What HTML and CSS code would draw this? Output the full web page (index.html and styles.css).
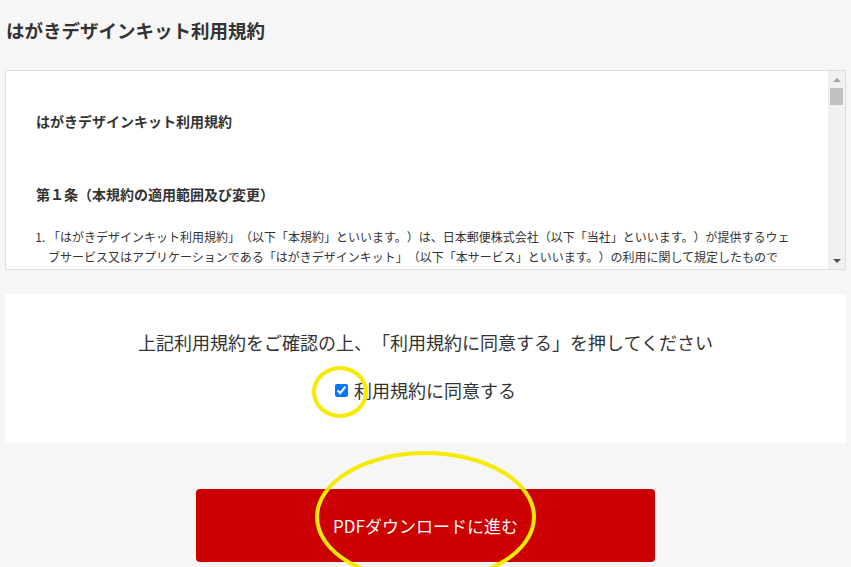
FILE: index.html
```html
<!DOCTYPE html>
<html lang="ja">
<head>
    <meta charset="UTF-8">
    <meta name="viewport" content="width=device-width, initial-scale=1.0">
    <title>はがきデザインキット利用規約</title>
    <link rel="stylesheet" href="styles.css">
</head>
<body>
    <div class="page">
        <h1 class="page-title">はがきデザインキット利用規約</h1>

        <div class="terms">
            <div class="terms-body">
                <h2 class="terms-title">はがきデザインキット利用規約</h2>

                <h3 class="article-title">第１条（本規約の適用範囲及び変更）</h3>
                <ol class="article-list">
                    <li>「はがきデザインキット利用規約」（以下「本規約」といいます。）は、日本郵便株式会社（以下「当社」といいます。）が提供するウェブサービス又はアプリケーションである「はがきデザインキット」（以下「本サービス」といいます。）の利用に関して規定したものです。</li>
                    <li>本サービスを利用する方（以下「利用者」といいます。）は、本規約に同意の上、本サービスを利用するものとします。</li>
                    <li>当社は、利用者の承諾を得ることなく、本規約を変更することがあります。</li>
                </ol>

                <h3 class="article-title">第２条（本サービスの内容）</h3>
                <ol class="article-list">
                    <li>本サービスは、利用者がはがきのデザインを作成し、印刷又はPDFファイルとして保存することができるサービスです。</li>
                </ol>
            </div>
            <div class="scrollbar">
                <span class="scroll-arrow scroll-up"></span>
                <div class="scroll-track">
                    <span class="scroll-thumb"></span>
                </div>
                <span class="scroll-arrow scroll-down"></span>
            </div>
        </div>

        <div class="agree">
            <p class="agree-text">上記利用規約をご確認の上、「利用規約に同意する」を押してください</p>
            <label class="agree-check">
                <input type="checkbox" checked>
                <span>利用規約に同意する</span>
            </label>
        </div>

        <div class="actions">
            <button class="btn-next">PDFダウンロードに進む</button>
        </div>
    </div>

    <div class="mark mark-check"></div>
    <div class="mark mark-button"></div>
</body>
</html>
```

FILE: styles.css
```css
* {
    margin: 0;
    padding: 0;
    box-sizing: border-box;
}

body {
    background-color: #f6f6f6;
    color: #333;
    font-family: "Noto Sans CJK JP", "Noto Sans", sans-serif;
    text-spacing-trim: space-all;
    overflow: hidden;
}

.page {
    padding: 0 5px;
}

.page-title {
    padding: 17px 1px 0;
    height: 70px;
    font-size: 18.5px;
    line-height: 26px;
    font-weight: bold;
    color: #333;
}

/* terms box with a drawn scrollbar */
.terms {
    display: flex;
    height: 200px;
    background-color: #fff;
    border: 1px solid #ddd;
}

.terms-body {
    flex: 1;
    overflow: hidden;
    padding: 40px 30px 0 30px;
    font-size: 12px;
    line-height: 20px;
    color: #333;
}

.scrollbar {
    width: 17px;
    display: flex;
    flex-direction: column;
    background-color: #f1f1f1;
}

.scroll-arrow {
    height: 17px;
    display: flex;
    align-items: center;
    justify-content: center;
}

.scroll-up::before {
    content: "";
    border-left: 4px solid transparent;
    border-right: 4px solid transparent;
    border-bottom: 4px solid #a3a3a3;
}

.scroll-down::before {
    content: "";
    border-left: 4px solid transparent;
    border-right: 4px solid transparent;
    border-top: 4px solid #505050;
}

.scroll-track {
    flex: 1;
    padding: 0 2px;
}

.scroll-thumb {
    display: block;
    height: 17px;
    background-color: #c1c1c1;
}

.terms-title {
    font-size: 14px;
    line-height: 20px;
    font-weight: bold;
    margin-bottom: 53px;
}

.article-title {
    font-size: 14px;
    line-height: 20px;
    font-weight: bold;
    margin-bottom: 23px;
}

.article-list {
    padding-left: 12px;
    margin-bottom: 40px;
}

.agree {
    margin-top: 24px;
    height: 149px;
    background-color: #fff;
    display: flex;
    flex-direction: column;
    align-items: center;
    padding-top: 35px;
    gap: 21px;
    font-size: 18px;
    line-height: 27px;
    color: #333;
}

.agree-check {
    display: flex;
    align-items: center;
    gap: 6px;
    cursor: pointer;
}

.agree-check input {
    width: 13px;
    height: 13px;
    margin: 0;
}

.actions {
    display: flex;
    justify-content: center;
    padding-top: 46px;
}

.btn-next {
    width: 459px;
    height: 73px;
    border: none;
    border-radius: 4px;
    background-color: #cc0000;
    color: #fff;
    font-family: inherit;
    font-size: 17px;
    text-spacing-trim: space-all;
    cursor: pointer;
}

.mark {
    position: absolute;
    border: 4px solid #f6ea00;
    border-radius: 50%;
    pointer-events: none;
}

.mark-check {
    left: 312px;
    top: 366px;
    width: 56px;
    height: 52px;
}

.mark-button {
    left: 315px;
    top: 451px;
    width: 221px;
    height: 132px;
}
```
